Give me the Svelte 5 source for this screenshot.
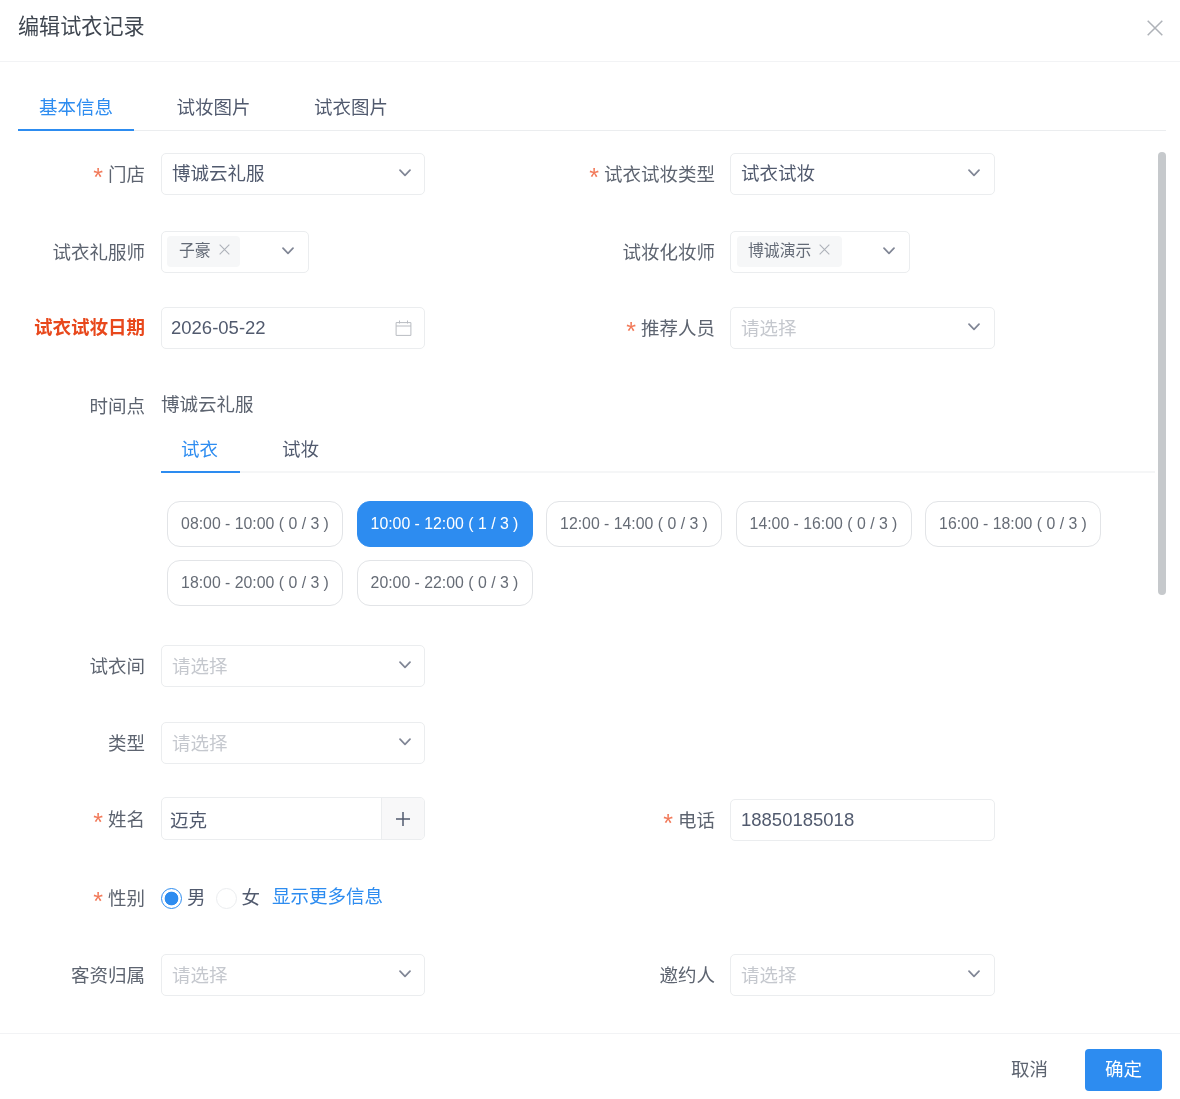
<script>
  const topTabs = ['基本信息', '试妆图片', '试衣图片'];
  const slots = ['08:00 - 10:00', '10:00 - 12:00', '12:00 - 14:00', '14:00 - 16:00', '16:00 - 18:00', '18:00 - 20:00', '20:00 - 22:00'];
</script>

{#snippet chevron()}
  <svg class="chev" viewBox="0 0 12 8" width="12" height="8" aria-hidden="true"><path d="M1 1.2 6 6.4 11 1.2" fill="none" stroke="#808695" stroke-width="1.7" stroke-linecap="round" stroke-linejoin="round"/></svg>
{/snippet}

{#snippet cross(size)}
  <svg class="x" viewBox="0 0 10 10" width={size} height={size} aria-hidden="true"><path d="M.6.6 9.4 9.4M9.4.6.6 9.4" fill="none" stroke="#aeb2b9" stroke-width="1"/></svg>
{/snippet}

{#snippet label(text, req)}
  <div class="label">{#if req}<span class="star">*</span>{/if}{text}</div>
{/snippet}

{#snippet select(text, placeholder)}
  <div class="box select"><span class={placeholder ? 'ph' : ''}>{text}</span>{@render chevron()}</div>
{/snippet}

<div class="app">
  <header class="head">
    <div class="title">编辑试衣记录</div>
    <svg class="close" viewBox="0 0 16 16" width="16" height="16" aria-hidden="true"><path d="M.7.7 15.3 15.3M15.3.7.7 15.3" fill="none" stroke="#aeb2b8" stroke-width="1.5"/></svg>
  </header>

  <nav class="tabs">
    {#each topTabs as t, i}
      <div class="tab" class:on={i === 0}>{t}</div>
    {/each}
  </nav>

  <main class="form">
    <div class="scrollbar"></div>

    <div class="row r1">
      <div class="field">{@render label('门店', true)}{@render select('博诚云礼服')}</div>
      <div class="field">{@render label('试衣试妆类型', true)}{@render select('试衣试妆')}</div>
    </div>

    <div class="row r2">
      <div class="field">
        {@render label('试衣礼服师')}
        <div class="box multi w148"><span class="tag t1">子豪{@render cross(11)}</span>{@render chevron()}</div>
      </div>
      <div class="field">
        {@render label('试妆化妆师')}
        <div class="box multi w180"><span class="tag t2">博诚演示{@render cross(11)}</span>{@render chevron()}</div>
      </div>
    </div>

    <div class="row r3">
      <div class="field">
        <div class="label danger">试衣试妆日期</div>
        <div class="box select date">
          <span>2026-05-22</span>
          <svg viewBox="0 0 16 16" width="17" height="16" aria-hidden="true"><path d="M.6 2.6h14.8v12.8H.6zM.6 6h14.8M4 .5v3M12 .5v3" fill="none" stroke="#b9bcc2" stroke-width="1"/></svg>
        </div>
      </div>
      <div class="field">{@render label('推荐人员', true)}{@render select('请选择', true)}</div>
    </div>

    <div class="row r4">
      <div class="field">{@render label('时间点')}<div class="plain">博诚云礼服</div></div>
    </div>

    <div class="subtabs">
      <div class="subtab on">试衣</div>
      <div class="subtab">试妆</div>
    </div>

    <div class="slots">
      {#each slots as s, i}
        <div class="slot" class:active={i === 1}>{s} ( {i === 1 ? 1 : 0} / 3 )</div>
      {/each}
    </div>

    <div class="row r5">
      <div class="field">{@render label('试衣间')}{@render select('请选择', true)}</div>
    </div>

    <div class="row r6">
      <div class="field">{@render label('类型')}{@render select('请选择', true)}</div>
    </div>

    <div class="row r7">
      <div class="field name">
        {@render label('姓名', true)}
        <div class="box group">
          <span class="gval">迈克</span>
          <div class="plus">
            <svg viewBox="0 0 14 14" width="14" height="14" aria-hidden="true"><path d="M7 0v14M0 7h14" stroke="#515a6e" stroke-width="1.5"/></svg>
          </div>
        </div>
      </div>
      <div class="field phone">
        {@render label('电话', true)}
        <div class="box select"><span>18850185018</span></div>
      </div>
    </div>

    <div class="row r8">
      <div class="field">
        {@render label('性别', true)}
        <div class="radios">
          <span class="radio checked"></span><span class="rtext">男</span>
          <span class="radio second"></span><span class="rtext">女</span>
          <span class="more">显示更多信息</span>
        </div>
      </div>
    </div>

    <div class="row r9">
      <div class="field">{@render label('客资归属')}{@render select('请选择', true)}</div>
      <div class="field">{@render label('邀约人')}{@render select('请选择', true)}</div>
    </div>
  </main>

  <footer class="foot">
    <span class="cancel">取消</span>
    <span class="ok">确定</span>
  </footer>
</div>

<style>
  :global(body) {
    margin: 0;
    background: #fff;
  }
  .app {
    width: 1180px;
    height: 1099px;
    display: flex;
    flex-direction: column;
    overflow: hidden;
    background: #fff;
    color: #515a6e;
    font-family: "Liberation Sans", "Noto Sans CJK SC", sans-serif;
    font-size: 18.5px;
    filter: blur(0.7px);
  }
  .head {
    height: 62px;
    flex: none;
    box-sizing: border-box;
    border-bottom: 1px solid #f2f3f5;
    display: flex;
    align-items: center;
    justify-content: space-between;
    padding: 0 17px 8px 18px;
  }
  .title {
    font-size: 21.1px;
    line-height: 26px;
    color: #3f4650;
    margin-top: 1px;
  }
  .close {
    margin-top: 3px;
  }
  .tabs {
    flex: none;
    height: 69px;
    box-sizing: border-box;
    margin: 0 14px 0 18px;
    border-bottom: 1px solid #ebedef;
    display: flex;
    gap: 21.5px;
    align-items: flex-end;
  }
  .tab {
    height: 46px;
    line-height: 26px;
    box-sizing: border-box;
    padding: 10px 21px 0;
    margin-bottom: -1px;
    border-bottom: 2px solid transparent;
    width: 116px;
  }
  .tab.on {
    color: #2d8cf0;
    border-bottom-color: #2d8cf0;
  }
  .form {
    flex: 1;
    min-height: 0;
    position: relative;
    border-bottom: 1px solid #f2f3f5;
  }
  .scrollbar {
    position: absolute;
    right: 14px;
    top: 21px;
    width: 8px;
    height: 443px;
    border-radius: 4px;
    background: #c6c9cc;
  }
  .row {
    display: grid;
    grid-template-columns: 570px 1fr;
  }
  .r1 { margin-top: 22px; }
  .r2 { margin-top: 36px; }
  .r3 { margin-top: 34px; }
  .r4 { margin-top: 43px; }
  .r5 { margin-top: 39px; }
  .r6 { margin-top: 35px; }
  .r7 { margin-top: 33px; }
  .r8 { margin-top: 43px; }
  .r9 { margin-top: 42px; }
  .field {
    display: flex;
    align-items: center;
    gap: 16px;
  }
  .field:nth-child(2) {
    gap: 15px;
  }
  .field:nth-child(2) .box.select {
    width: 265px;
    padding-right: 14px;
  }
  .label {
    width: 145px;
    flex: none;
    text-align: right;
    line-height: 26px;
    color: #5d6470;
    margin-top: 2px;
  }
  .star {
    color: #f27a5a;
    font-size: 25px;
    line-height: 0;
    vertical-align: -5px;
    margin-right: 5px;
    font-family: "Liberation Sans", sans-serif;
  }
  .danger {
    color: #e8481c;
    font-weight: 700;
    margin-top: 0;
  }
  .box {
    box-sizing: border-box;
    width: 264px;
    height: 42px;
    border: 1px solid #ebedef;
    border-radius: 5px;
    background: #fff;
    display: flex;
    align-items: center;
  }
  .select {
    justify-content: space-between;
    padding: 0 13px 0 10px;
    line-height: 26px;
  }
  .ph {
    color: #c5c8ce;
    margin-top: 2px;
  }
  .select svg {
    margin-top: -2px;
  }
  .date svg {
    margin-top: 0;
  }
  .date {
    padding: 0 12px 0 9px;
  }
  .multi {
    padding: 0 14px 2px 5px;
    justify-content: space-between;
  }
  .w148 { width: 148px; }
  .w180 { width: 180px; padding-left: 6px; }
  .tag {
    height: 31px;
    border-radius: 4px;
    background: #f6f7f8;
    display: flex;
    align-items: center;
    box-sizing: border-box;
    font-size: 15.84px;
    color: #636a76;
    padding: 0 0 3px 12px;
  }
  .t1 { width: 73px; }
  .t2 { width: 105px; padding-left: 11px; }
  .tag .x {
    margin-left: 8px;
  }
  .plain {
    margin-top: -2px;
    line-height: 26px;
    color: #5d6470;
  }
  .subtabs {
    margin: 9px 25px 0 161px;
    height: 44px;
    box-sizing: border-box;
    border-bottom: 2px solid #f5f6f7;
    display: flex;
    gap: 22px;
    align-items: flex-end;
  }
  .subtab {
    width: 79px;
    height: 38px;
    box-sizing: border-box;
    padding: 2px 20px 0;
    line-height: 26px;
    margin-bottom: -2px;
    border-bottom: 2px solid transparent;
  }
  .subtab.on {
    color: #2d8cf0;
    border-bottom-color: #2d8cf0;
  }
  .slots {
    margin: 28px 0 0 167px;
    width: 960px;
    display: flex;
    flex-wrap: wrap;
    gap: 13px 13.5px;
  }
  .slot {
    box-sizing: border-box;
    width: 176px;
    height: 46px;
    border: 1px solid #e2e4e7;
    border-radius: 13px;
    display: flex;
    align-items: center;
    justify-content: center;
    font-size: 15.84px;
    color: #666c76;
    white-space: pre;
  }
  .slot.active {
    background: #2d8cf0;
    border-color: #2d8cf0;
    color: #fff;
  }
  .name {
    align-items: flex-start;
  }
  .name .label {
    margin-top: 10px;
  }
  .group {
    height: 43px;
    justify-content: space-between;
    overflow: hidden;
  }
  .gval {
    padding-left: 8px;
  }
  .plus {
    width: 43px;
    align-self: stretch;
    box-sizing: border-box;
    background: #f8f8f9;
    border-left: 1px solid #ebedef;
    display: flex;
    align-items: center;
    justify-content: center;
  }
  .phone {
    margin-top: 2px;
  }
  .radios {
    display: flex;
    align-items: center;
    height: 26px;
    line-height: 26px;
  }
  .radio {
    box-sizing: border-box;
    width: 21px;
    height: 21px;
    border-radius: 50%;
    border: 1px solid #ebedef;
    background: #fff;
    flex: none;
  }
  .radio.checked {
    border-color: #2d8cf0;
    background: radial-gradient(circle, #2d8cf0 0 6.5px, #fff 7.2px);
  }
  .rtext {
    margin-left: 5px;
  }
  .second {
    margin-left: 10px;
  }
  .more {
    color: #2d8cf0;
    margin-left: 12px;
    margin-top: -2px;
  }
  .foot {
    flex: none;
    height: 65px;
    box-sizing: border-box;
    display: flex;
    justify-content: flex-end;
    align-items: flex-start;
    padding: 15px 18px 0 0;
    gap: 37px;
  }
  .cancel {
    line-height: 42px;
    color: #5d6470;
  }
  .ok {
    width: 77px;
    height: 42px;
    border-radius: 4px;
    background: #2d8cf0;
    color: #fff;
    line-height: 42px;
    text-align: center;
  }
</style>
